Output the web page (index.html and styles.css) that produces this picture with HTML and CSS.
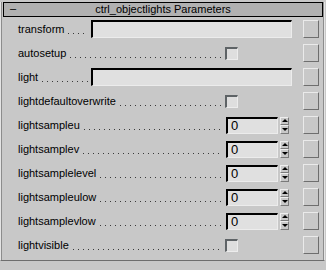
FILE: index.html
```html
<!DOCTYPE html>
<html lang="en">
<head>
    <meta charset="UTF-8">
    <title>ctrl_objectlights Parameters</title>
    <link rel="stylesheet" href="styles.css">
</head>
<body>
    <div class="rollout">
        <div class="rollout-title">
            <span class="toggle">&ndash;</span>
            <span class="caption">ctrl_objectlights Parameters</span>
        </div>

        <div class="row">
            <span class="label">transform</span><span class="leader"></span>
            <div class="ctl ctl-text"><div class="field"></div></div>
            <div class="btn"></div>
        </div>
        <div class="row">
            <span class="label">autosetup</span><span class="leader"></span>
            <div class="ctl ctl-check"><div class="check"></div></div>
            <div class="btn"></div>
        </div>
        <div class="row">
            <span class="label">light</span><span class="leader"></span>
            <div class="ctl ctl-text"><div class="field"></div></div>
            <div class="btn"></div>
        </div>
        <div class="row">
            <span class="label">lightdefaultoverwrite</span><span class="leader"></span>
            <div class="ctl ctl-check"><div class="check"></div></div>
            <div class="btn"></div>
        </div>
        <div class="row">
            <span class="label">lightsampleu</span><span class="leader"></span>
            <div class="ctl ctl-spin">
                <div class="spin-field">0</div>
                <div class="spin-arrows"><span class="up"></span><span class="down"></span></div>
            </div>
            <div class="btn"></div>
        </div>
        <div class="row">
            <span class="label">lightsamplev</span><span class="leader"></span>
            <div class="ctl ctl-spin">
                <div class="spin-field">0</div>
                <div class="spin-arrows"><span class="up"></span><span class="down"></span></div>
            </div>
            <div class="btn"></div>
        </div>
        <div class="row">
            <span class="label">lightsamplelevel</span><span class="leader"></span>
            <div class="ctl ctl-spin">
                <div class="spin-field">0</div>
                <div class="spin-arrows"><span class="up"></span><span class="down"></span></div>
            </div>
            <div class="btn"></div>
        </div>
        <div class="row">
            <span class="label">lightsampleulow</span><span class="leader"></span>
            <div class="ctl ctl-spin">
                <div class="spin-field">0</div>
                <div class="spin-arrows"><span class="up"></span><span class="down"></span></div>
            </div>
            <div class="btn"></div>
        </div>
        <div class="row">
            <span class="label">lightsamplevlow</span><span class="leader"></span>
            <div class="ctl ctl-spin">
                <div class="spin-field">0</div>
                <div class="spin-arrows"><span class="up"></span><span class="down"></span></div>
            </div>
            <div class="btn"></div>
        </div>
        <div class="row">
            <span class="label">lightvisible</span><span class="leader"></span>
            <div class="ctl ctl-check"><div class="check"></div></div>
            <div class="btn"></div>
        </div>
    </div>
</body>
</html>
```

FILE: styles.css
```css
body {
    margin: 0;
    background: #c8c8c8;
    font-family: "Liberation Sans", Arial, sans-serif;
    font-size: 11px;
    color: #000;
}
.rollout {
    margin-top: 9px;
    width: 323px;
    height: 258px;
    border-left: 1px solid #e4e4e4;
    border-right: 1px solid #e4e4e4;
    border-bottom: 1px solid #6e6e6e;
    box-shadow: inset 1px 0 0 #8c8c8c, inset -1px 0 0 #8c8c8c;
}
.rollout-title {
    display: flex;
    align-items: center;
    height: 13px;
    margin: -7px 1px 0 2px;
    background: #b1b1b1;
    border: 1px solid #000;
    position: relative;
}
.toggle {
    position: absolute;
    left: 6px;
    top: -1px;
}
.caption {
    flex: 1;
    text-align: center;
    line-height: 13px;
}
.row {
    display: flex;
    align-items: center;
    height: 24px;
    padding-left: 17px;
    padding-right: 5px;
}
.row:first-of-type {
    margin-top: 5px;
}
.label {
    white-space: nowrap;
    line-height: 14px;
}
.leader {
    flex: 1;
    height: 1px;
    margin: 8px 3px 0 4px;
    background-image: linear-gradient(to right, #3a3a3a 1px, transparent 1px);
    background-size: 5px 1px;
}
.ctl {
    display: flex;
    align-items: center;
}
.ctl-text {
    width: 212px;
}
.ctl-check {
    width: 78px;
}
.ctl-spin {
    width: 77px;
}
.field {
    width: 198px;
    height: 15px;
    background: #e0e0e0;
    border-top: 2px solid #000;
    border-left: 2px solid #000;
    border-bottom: 1px solid #ececec;
    border-right: 1px solid #ececec;
}
.check {
    width: 10px;
    height: 10px;
    background: #dedede;
    border-top: 2px solid #5e6366;
    border-left: 2px solid #5e6366;
    border-bottom: 1px solid #ececec;
    border-right: 1px solid #ececec;
}
.spin-field {
    width: 46px;
    height: 14px;
    padding-left: 3px;
    background: #e0e0e0;
    border-top: 2px solid #000;
    border-left: 2px solid #000;
    border-bottom: 1px solid #ececec;
    border-right: 1px solid #ececec;
    line-height: 14px;
    font-size: 13px;
}
.spin-arrows {
    display: flex;
    flex-direction: column;
    margin-left: 2px;
    width: 9px;
    height: 17px;
}
.spin-arrows span {
    flex: 1;
    display: flex;
    align-items: center;
    justify-content: center;
    border-top: 1px solid #eeeeee;
    border-left: 1px solid #eeeeee;
    border-bottom: 1px solid #7a7a7a;
    border-right: 1px solid #7a7a7a;
    box-sizing: border-box;
}
.spin-arrows .up::after {
    content: "";
    border-left: 3px solid transparent;
    border-right: 3px solid transparent;
    border-bottom: 3px solid #000;
}
.spin-arrows .down::after {
    content: "";
    border-left: 3px solid transparent;
    border-right: 3px solid transparent;
    border-top: 3px solid #000;
}
.btn {
    width: 14px;
    height: 16px;
    border-top: 1px solid #eaeaea;
    border-left: 1px solid #eaeaea;
    border-bottom: 1px solid #6e6e6e;
    border-right: 1px solid #6e6e6e;
}
```
